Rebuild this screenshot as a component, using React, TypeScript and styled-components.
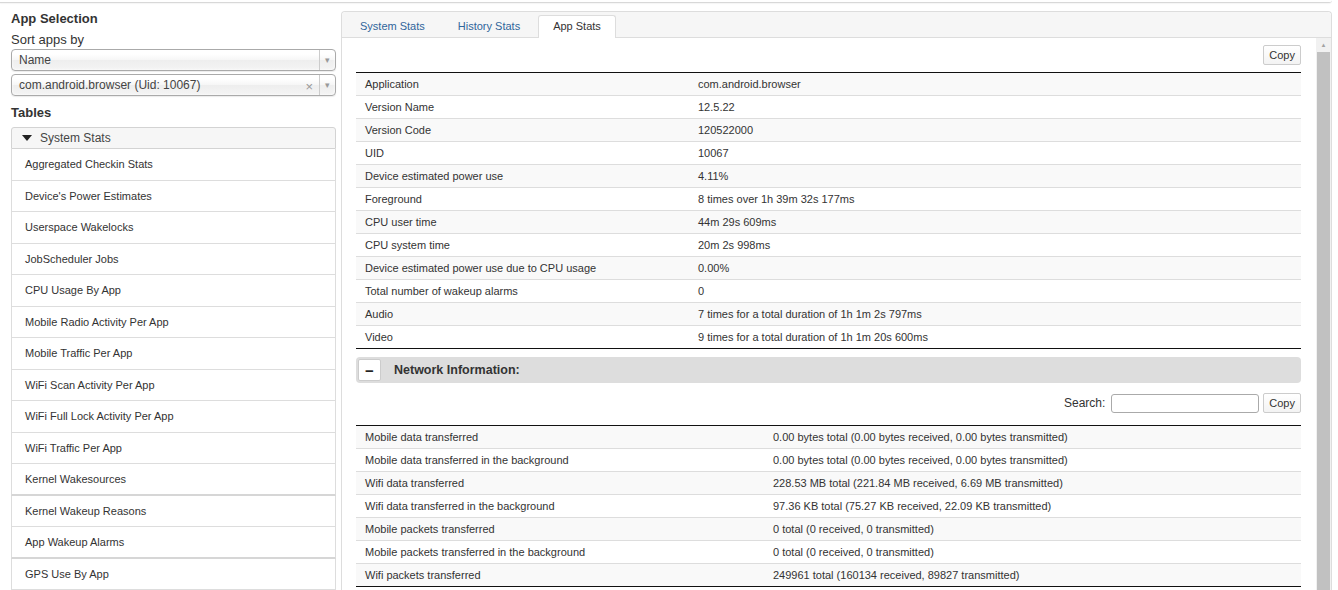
import styled, { createGlobalStyle } from 'styled-components';

const appRows: [string, string][] = [
  ['Application', 'com.android.browser'],
  ['Version Name', '12.5.22'],
  ['Version Code', '120522000'],
  ['UID', '10067'],
  ['Device estimated power use', '4.11%'],
  ['Foreground', '8 times over 1h 39m 32s 177ms'],
  ['CPU user time', '44m 29s 609ms'],
  ['CPU system time', '20m 2s 998ms'],
  ['Device estimated power use due to CPU usage', '0.00%'],
  ['Total number of wakeup alarms', '0'],
  ['Audio', '7 times for a total duration of 1h 1m 2s 797ms'],
  ['Video', '9 times for a total duration of 1h 1m 20s 600ms'],
];

const networkRows: [string, string][] = [
  ['Mobile data transferred', '0.00 bytes total (0.00 bytes received, 0.00 bytes transmitted)'],
  ['Mobile data transferred in the background', '0.00 bytes total (0.00 bytes received, 0.00 bytes transmitted)'],
  ['Wifi data transferred', '228.53 MB total (221.84 MB received, 6.69 MB transmitted)'],
  ['Wifi data transferred in the background', '97.36 KB total (75.27 KB received, 22.09 KB transmitted)'],
  ['Mobile packets transferred', '0 total (0 received, 0 transmitted)'],
  ['Mobile packets transferred in the background', '0 total (0 received, 0 transmitted)'],
  ['Wifi packets transferred', '249961 total (160134 received, 89827 transmitted)'],
];

const tables = [
  { name: 'Aggregated Checkin Stats' },
  { name: "Device's Power Estimates" },
  { name: 'Userspace Wakelocks' },
  { name: 'JobScheduler Jobs' },
  { name: 'CPU Usage By App' },
  { name: 'Mobile Radio Activity Per App' },
  { name: 'Mobile Traffic Per App' },
  { name: 'WiFi Scan Activity Per App' },
  { name: 'WiFi Full Lock Activity Per App' },
  { name: 'WiFi Traffic Per App' },
  { name: 'Kernel Wakesources', thick: true },
  { name: 'Kernel Wakeup Reasons' },
  { name: 'App Wakeup Alarms', thick: true },
  { name: 'GPS Use By App' },
];

const tabs = ['System Stats', 'History Stats', 'App Stats'];

const App = () => {
  return (
    <>
      <GlobalStyle />
      <Page>
        <TopStrip />
        <Main>
          <Sidebar>
            <Heading>App Selection</Heading>
            <SortLabel>Sort apps by</SortLabel>
            <Select $gap={1}>
              <SelectText>Name</SelectText>
              <SelectArrow>▾</SelectArrow>
            </Select>
            <Select $gap={3}>
              <SelectText>com.android.browser (Uid: 10067)</SelectText>
              <ClearMark>×</ClearMark>
              <SelectArrow>▾</SelectArrow>
            </Select>
            <Heading $gap={9}>Tables</Heading>
            <AccordionHeader>
              <Caret />
              System Stats
            </AccordionHeader>
            <TableList>
              {tables.map((t) => (
                <TableItem key={t.name} $thick={!!t.thick}>
                  {t.name}
                </TableItem>
              ))}
            </TableList>
          </Sidebar>

          <Panel>
            <TabBar>
              {tabs.map((tab) => (
                <Tab key={tab} $active={tab === 'App Stats'}>
                  {tab}
                </Tab>
              ))}
            </TabBar>
            <PanelBody>
              <Content>
                <ToolRow>
                  <CopyButton>Copy</CopyButton>
                </ToolRow>
                <StatsTable $labelWidth={333}>
                  <tbody>
                    {appRows.map(([k, v]) => (
                      <tr key={k}>
                        <td>{k}</td>
                        <td>{v}</td>
                      </tr>
                    ))}
                  </tbody>
                </StatsTable>

                <SectionHeader>
                  <ToggleButton>−</ToggleButton>
                  <SectionTitle>Network Information:</SectionTitle>
                </SectionHeader>

                <SearchRow>
                  <SearchLabel>Search:</SearchLabel>
                  <SearchInput type="text" />
                  <CopyButton>Copy</CopyButton>
                </SearchRow>

                <StatsTable $labelWidth={408} $gap={12}>
                  <tbody>
                    {networkRows.map(([k, v]) => (
                      <tr key={k}>
                        <td>{k}</td>
                        <td>{v}</td>
                      </tr>
                    ))}
                  </tbody>
                </StatsTable>
              </Content>
              <ScrollTrack>
                <ScrollArrow>▲</ScrollArrow>
                <ScrollThumb />
              </ScrollTrack>
            </PanelBody>
          </Panel>
        </Main>
      </Page>
    </>
  );
};

const GlobalStyle = createGlobalStyle`
  * { box-sizing: border-box; }
  body {
    margin: 0;
    background: #fff;
    color: #333;
    font-family: "Liberation Sans", Arial, sans-serif;
  }
`;

const Page = styled.div`
  display: flex;
  flex-direction: column;
  height: 590px;
  overflow: hidden;
`;

const TopStrip = styled.div`
  height: 3px;
  margin-right: 6px;
  border-bottom: 1px solid #d8d8d8;
  border-bottom-right-radius: 4px;
  box-shadow: 0 1px 1px rgba(0, 0, 0, 0.04);
  flex-shrink: 0;
`;

const Main = styled.div`
  display: flex;
  gap: 5px;
  flex: 1;
  min-height: 0;
  padding: 8px 6px 0 11px;
`;

const Sidebar = styled.div`
  width: 325px;
  flex-shrink: 0;
  display: flex;
  flex-direction: column;
`;

const Heading = styled.div<{ $gap?: number }>`
  font-size: 13px;
  font-weight: 700;
  line-height: 16px;
  margin-top: ${({ $gap }) => $gap ?? 0}px;
  color: #333;
`;

const SortLabel = styled.div`
  font-size: 13px;
  line-height: 16px;
  margin-top: 5px;
`;

const Select = styled.div<{ $gap: number }>`
  height: 22px;
  margin-top: ${({ $gap }) => $gap}px;
  display: flex;
  align-items: center;
  border: 1px solid #aaa;
  border-radius: 4px;
  background: linear-gradient(#fff 20%, #f6f6f6 50%, #eee 52%, #f4f4f4 100%);
  box-shadow: inset 0 0 3px #fff, 0 1px 1px rgba(0, 0, 0, 0.08);
  font-size: 12px;
  color: #444;
`;

const SelectText = styled.span`
  flex: 1;
  padding-left: 7px;
  white-space: nowrap;
`;

const ClearMark = styled.span`
  font-size: 13px;
  color: #999;
  margin-right: 6px;
  line-height: 1;
  padding-top: 2px;
`;

const SelectArrow = styled.span`
  width: 16px;
  height: 100%;
  display: flex;
  align-items: center;
  justify-content: center;
  border-left: 1px solid #ccc;
  font-size: 9px;
  color: #999;
`;

const AccordionHeader = styled.div`
  margin-top: 6px;
  height: 22px;
  display: flex;
  align-items: center;
  padding-left: 10px;
  border: 1px solid #d3d3d3;
  border-radius: 3px 3px 0 0;
  background: #f6f6f6;
  font-size: 12px;
  color: #454545;
`;

const Caret = styled.span`
  width: 0;
  height: 0;
  margin-right: 8px;
  border-left: 5px solid transparent;
  border-right: 5px solid transparent;
  border-top: 6px solid #222;
`;

const TableList = styled.div`
  display: flex;
  flex-direction: column;
`;

const TableItem = styled.div<{ $thick: boolean }>`
  height: 31.5px;
  flex-shrink: 0;
  display: flex;
  align-items: center;
  padding-left: 13px;
  border: 1px solid #ddd;
  border-top: none;
  border-bottom: ${({ $thick }) => ($thick ? '2px solid #d6d6d6' : '1px solid #ddd')};
  font-size: 11px;
  color: #333;
`;

const Panel = styled.div`
  flex: 1;
  display: flex;
  flex-direction: column;
  border: 1px solid #ddd;
  border-bottom: none;
  border-radius: 4px 4px 0 0;
  min-width: 0;
`;

const TabBar = styled.div`
  height: 26px;
  flex-shrink: 0;
  display: flex;
  align-items: flex-end;
  gap: 3px;
  padding: 0 3px;
  background: #f6f6f6;
  border-bottom: 1px solid #ddd;
  border-radius: 4px 4px 0 0;
`;

const Tab = styled.div<{ $active: boolean }>`
  height: 23px;
  display: flex;
  align-items: center;
  padding: 0 14px 2px;
  font-size: 11px;
  margin-bottom: -1px;
  border: 1px solid ${({ $active }) => ($active ? '#ddd' : 'transparent')};
  border-bottom: none;
  border-radius: 3px 3px 0 0;
  background: ${({ $active }) => ($active ? '#fff' : 'transparent')};
  color: ${({ $active }) => ($active ? '#333' : '#30659b')};
`;

const PanelBody = styled.div`
  flex: 1;
  display: flex;
  min-height: 0;
`;

const Content = styled.div`
  flex: 1;
  min-width: 0;
  padding: 7px 15px 0 14px;
  overflow: hidden;
`;

const ToolRow = styled.div`
  display: flex;
  justify-content: flex-end;
  margin-bottom: 7px;
`;

const CopyButton = styled.button`
  height: 20px;
  padding: 0 5px;
  font-family: inherit;
  font-size: 11px;
  color: #333;
  border: 1px solid #ccc;
  border-radius: 2px;
  background: linear-gradient(#fff, #f3f3f3);
`;

const StatsTable = styled.table<{ $labelWidth: number; $gap?: number }>`
  width: 100%;
  margin-top: ${({ $gap }) => $gap ?? 0}px;
  border-collapse: separate;
  border-spacing: 0;
  border-top: 1px solid #111;
  border-bottom: 1px solid #111;
  font-size: 11px;
  color: #333;

  td {
    height: 23px;
    padding: 0 9px;
    border-top: 1px solid #ddd;
    white-space: nowrap;
  }

  tr:first-child td {
    border-top: none;
    height: 22px;
  }

  td:first-child {
    width: ${({ $labelWidth }) => $labelWidth}px;
  }

  tr:nth-child(odd) td {
    background: #f9f9f9;
  }
`;

const SectionHeader = styled.div`
  margin-top: 8px;
  height: 26px;
  display: flex;
  align-items: center;
  padding-left: 2px;
  background: #ddd;
  border-radius: 4px;
`;

const ToggleButton = styled.div`
  width: 23px;
  height: 22px;
  display: flex;
  align-items: center;
  justify-content: center;
  background: #fff;
  border: 1px solid #ccc;
  border-radius: 2px;
  font-size: 15px;
  font-weight: 700;
  color: #222;
`;

const SectionTitle = styled.span`
  margin-left: 13px;
  font-size: 12.5px;
  font-weight: 700;
  color: #333;
`;

const SearchRow = styled.div`
  margin-top: 10px;
  height: 20px;
  display: flex;
  justify-content: flex-end;
  align-items: center;
`;

const SearchLabel = styled.span`
  font-size: 12px;
  color: #333;
`;

const SearchInput = styled.input`
  width: 148px;
  height: 19px;
  margin: 0 4px 0 6px;
  border: 1px solid #aaa;
  border-radius: 3px;
  outline: none;
`;

const ScrollTrack = styled.div`
  width: 15px;
  flex-shrink: 0;
  display: flex;
  flex-direction: column;
  align-items: stretch;
  background: #f1f1f1;
`;

const ScrollArrow = styled.div`
  height: 14px;
  display: flex;
  align-items: center;
  justify-content: center;
  font-size: 6px;
  color: #a3a3a3;
`;

const ScrollThumb = styled.div`
  flex: 1;
  margin: 0 1px;
  background: #c1c1c1;
`;

export default App;
